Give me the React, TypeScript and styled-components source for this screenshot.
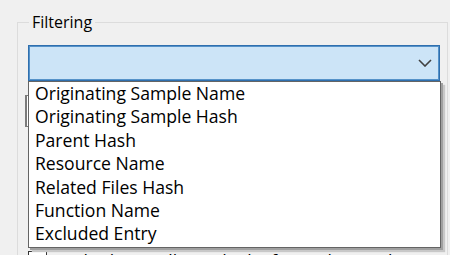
import React from "react";
import styled, { createGlobalStyle } from "styled-components";

const Global = createGlobalStyle`
  html, body { margin: 0; padding: 0; background: #f0f0f0; overflow: hidden; }
  body { width: 450px; height: 255px; font-family: "Open Sans", "Noto Sans", sans-serif; color: #000; }
`;

const Group = styled.fieldset`
  margin: 12px 2px 0 17px;
  padding: 0 7px 0 10px;
  border: 1px solid #dcdcdc;
  min-width: 0;
  height: 300px;
`;

const Legend = styled.legend`
  margin-left: 1px;
  padding: 0 3px;
  font-size: 16px;
  line-height: 20px;
`;

const ComboWrap = styled.div`
  position: relative;
  margin-top: 13px;
  z-index: 2;
`;

const Combo = styled.div`
  box-sizing: border-box;
  height: 36px;
  width: 412px;
  background: #cce4f7;
  border: 1px solid #2f6fae;
  box-shadow: inset 0 0 0 1px #5592c9;
  display: flex;
  align-items: center;
  justify-content: flex-end;
  padding-right: 7px;
`;

const List = styled.ul`
  position: absolute;
  top: 100%;
  left: 0;
  width: 413px;
  box-sizing: border-box;
  margin: 0;
  padding: 0 0 1px 0;
  list-style: none;
  background: #fff;
  border: 1px solid #646464;
  box-shadow: 2px 2px 0 #a0a0a0, 4px 4px 1px #c8c8c8;
`;

const Item = styled.li`
  height: 23.4px;
  line-height: 23.4px;
  padding-left: 6px;
  font-size: 17.6px;
  letter-spacing: 0;
  white-space: nowrap;
`;

const Behind = styled.div`
  margin: 14px 0 0 -3px;
  height: 30px;
  border: 1px solid #7a7a7a;
  border-left-width: 2px;
  background: #fff;
`;

const CheckRow = styled.div`
  display: flex;
  align-items: flex-start;
  gap: 12px;
  margin-top: 124px;
`;

const Box = styled.div`
  width: 19px;
  height: 19px;
  box-sizing: border-box;
  border: 1px solid #333;
  background: #fff;
`;

const CheckLabel = styled.span`
  font-size: 17.6px;
  line-height: 19px;
  margin-top: 1px;
  white-space: nowrap;
`;

const items = [
  "Originating Sample Name",
  "Originating Sample Hash",
  "Parent Hash",
  "Resource Name",
  "Related Files Hash",
  "Function Name",
  "Excluded Entry",
];

export default function App() {
  return (
    <>
      <Global />
      <Group>
        <Legend>Filtering</Legend>
        <ComboWrap>
          <Combo>
            <svg width="14" height="8" viewBox="0 0 14 8">
              <path d="M1 1 L7 7 L13 1" fill="none" stroke="#404040" strokeWidth="1.6" />
            </svg>
          </Combo>
          <List>
            {items.map((t) => (
              <Item key={t}>{t}</Item>
            ))}
          </List>
        </ComboWrap>
        <Behind />
        <CheckRow>
          <Box />
          <CheckLabel>Only show collapsed tabs for each sample</CheckLabel>
        </CheckRow>
      </Group>
    </>
  );
}
